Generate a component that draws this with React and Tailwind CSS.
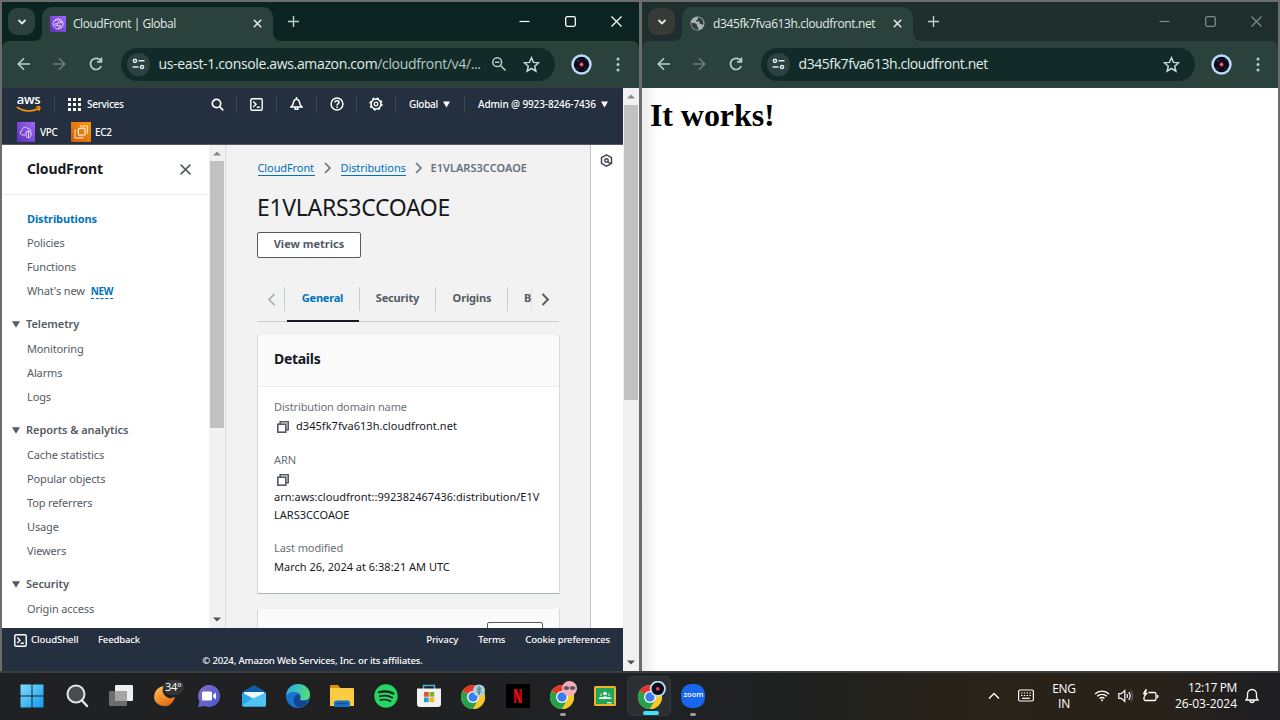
import React from "react";

const AWS = "font-['Noto_Sans',sans-serif]";

function Chevron({ className = "", d = "M2 4.5 6 8.5 10 4.5", w = 1.8 }) {
  return (
    <svg className={className} width="12" height="12" viewBox="0 0 12 12" fill="none" stroke="currentColor" strokeWidth={w}>
      <path d={d} />
    </svg>
  );
}

function CloudFrontIcon() {
  return (
    <svg width="16" height="16" viewBox="0 0 16 16" className="shrink-0">
      <defs>
        <linearGradient id="cf" x1="0" y1="1" x2="1" y2="0">
          <stop offset="0" stopColor="#5a30b5" />
          <stop offset="1" stopColor="#a166ff" />
        </linearGradient>
      </defs>
      <rect width="16" height="16" fill="url(#cf)" />
      <g fill="none" stroke="#eadfff" strokeWidth="0.9">
        <circle cx="8" cy="8" r="5" />
        <circle cx="6" cy="8.7" r="1.2" />
        <circle cx="9.6" cy="5.8" r="1.2" />
        <circle cx="9.8" cy="10.6" r="1.2" />
        <path d="M7 8 8.7 6.6M7 9.3l1.8.9M4 5.2l4-1.8M12.6 7l-2-1" />
      </g>
    </svg>
  );
}

function GlobeIcon() {
  return (
    <svg width="15" height="15" viewBox="0 0 15 15" className="shrink-0">
      <circle cx="7.5" cy="7.5" r="7" fill="#a9b3b1" />
      <path d="M1.2 6.800 4.800 7.200c1.500.2 2.200 1.200 2.200 2.300v1.300c.9 0 1.300.5 1.300 1.300v1.700A6.500 6.500 0 0 1 1.200 6.800ZM7.800 1.200v1.500c0 1-.8 1.500-1.800 1.500v1.400h2.600c.7 0 1.200.5 1.200 1.200v1.300h1.300c.8 0 1.300.6 1.500 1.400a6.300 6.300 0 0 0 .9-2.700 6.300 6.300 0 0 0-5.700-5.600Z" fill="#2a413c" />
    </svg>
  );
}

function Avatar({ size = 21 }) {
  return (
    <svg width={size} height={size} viewBox="0 0 21 21" className="shrink-0">
      <circle cx="10.500" cy="10.500" r="10.200" fill="#b9daf5" />
      <circle cx="10.500" cy="10.500" r="7.700" fill="#0b0a1c" />
      <path d="M6 6.500l2 .8M14 5.500l1 1M6 14.500l1.500-.6M13.500 14.500l1-.6" stroke="#6a6f95" strokeWidth="0.800" />
      <circle cx="10.500" cy="10.500" r="2.200" fill="#c9303f" />
      <circle cx="10.500" cy="10.500" r="1" fill="#ff9a9a" />
    </svg>
  );
}

function Flare({ flip }) {
  return (
    <svg width="8" height="8" viewBox="0 0 8 8" className={flip ? "-scale-x-100 self-end" : "self-end"}>
      <path d="M8 0v8H0a8 8 0 0 0 8-8Z" fill="#2a413c" />
    </svg>
  );
}

function BrowserWindow({ active, icon, title, titleClass, url, zoomed, children }) {
  const strip = active ? "bg-[#0b2421]" : "bg-[#1e2e2c]";
  const dd = active ? "bg-[#2a413c]" : "bg-[#383a37]";
  const ctl = active ? "pr-[17px] text-white" : "pr-[16px] text-[#7f8a88]";
  return (
    <div className="flex h-[669px] flex-col">
      <div className={`flex h-[39px] shrink-0 ${strip}`}>
        <div className={`ml-[6px] mt-[6px] flex h-[27px] w-[27px] items-center justify-center rounded-[9px] text-[#e3ece9] ${dd}`}>
          <Chevron d="M2.500 4 6 7.500 9.500 4" />
        </div>
        <div className="-ml-px flex"><Flare /></div>
        <div className="mt-[5px] flex h-[34px] w-[231px] items-center rounded-t-[10px] bg-[#2a413c] pb-px pl-[8px]">
          {icon}
          <span className={`whitespace-nowrap font-['Open_Sans',sans-serif] text-[12px] leading-[16px] text-[#e0ebe8] ${titleClass}`}>{title}</span>
          <svg className="ml-auto mr-[11px]" width="9" height="9" viewBox="0 0 9 9" stroke="#e3ece9" strokeWidth="1.500"><path d="M.8.8l7.400 7.400M8.200.8.8 8.200" /></svg>
        </div>
        <Flare flip />
        <svg className="ml-[7px] mt-[14px]" width="11" height="11" viewBox="0 0 11 11" stroke="#c3d0cd" strokeWidth="1.400"><path d="M5.500 0v11M0 5.500h11" /></svg>
        <div className={`ml-auto flex items-center pb-px ${ctl}`}>
          <svg width="11" height="11" viewBox="0 0 11 11" stroke="currentColor" strokeWidth="1.200"><path d="M.5 5.500h10" /></svg>
          <svg className="ml-[35px]" width="11" height="11" viewBox="0 0 11 11" fill="none" stroke="currentColor" strokeWidth="1.300"><rect x=".7" y=".7" width="9.600" height="9.600" rx="1.500" /></svg>
          <svg className="ml-[35px]" width="11" height="11" viewBox="0 0 11 11" stroke="currentColor" strokeWidth="1.300"><path d="M.5.5l10 10M10.500.5l-10 10" /></svg>
        </div>
      </div>
      <div className={`h-[47px] shrink-0 ${strip}`}>
        <div className="flex h-[47px] items-center rounded-t-[7px] bg-[#2a413c] pb-px pl-[15px]">
          <svg width="14" height="14" viewBox="0 0 14 14" fill="none" stroke="#b9d0ca" strokeWidth="1.600"><path d="M13 7H1.500M7 1.300 1.300 7 7 12.700" /></svg>
          <svg className="ml-[21px]" width="14" height="14" viewBox="0 0 14 14" fill="none" stroke="#6b7d79" strokeWidth="1.600"><path d="M1 7h11.500M7 1.300 12.700 7 7 12.700" /></svg>
          <svg className="ml-[22px]" width="16" height="16" viewBox="0 0 16 16" fill="none" stroke="#b9d0ca" strokeWidth="1.700"><path d="M13.200 10.200A5.600 5.600 0 1 1 12.700 4.700M13.400 1.600v4.300H9" /></svg>
          <div className="ml-[17px] flex h-[33px] w-[434px] items-center rounded-full bg-[#122b28] pl-[6px] pr-[15px]">
            <div className="flex h-[23px] w-[23px] items-center justify-center rounded-full bg-[#2d423f]">
              <svg width="13" height="12" viewBox="0 0 13 12" fill="none" stroke="#dcebe7" strokeWidth="1.500"><circle cx="3" cy="2.800" r="1.600" /><circle cx="10" cy="9" r="1.600" /><path d="M6.500 2.800H12.500M.5 9H6.500" /></svg>
            </div>
            <div className="ml-[8.500px] whitespace-nowrap font-['Open_Sans',sans-serif] text-[14px] leading-[18px] text-[#e0eeea]">{url}</div>
            {zoomed && (
              <svg className="ml-auto mr-[16px]" width="16" height="16" viewBox="0 0 16 16" fill="none" stroke="#b9d0ca" strokeWidth="1.500"><circle cx="6.200" cy="6.200" r="4.400" /><path d="M9.500 9.500l5 5M4 6.200h4.400" /></svg>
            )}
            <svg className={zoomed ? "" : "ml-auto"} width="17" height="17" viewBox="0 0 17 17" fill="none" stroke="#c6d8d3" strokeWidth="1.500"><path d="M8.500 1.700l2 4.700 5.100.4-3.900 3.400 1.200 5-4.400-2.700-4.400 2.700 1.200-5L1.400 6.800l5.100-.4Z" /></svg>
          </div>
          <div className="ml-[16px] flex"><Avatar /></div>
          <svg className="ml-[23.500px]" width="4" height="15" viewBox="0 0 4 15" fill="#b9d0ca"><circle cx="2" cy="2" r="1.500" /><circle cx="2" cy="7.500" r="1.500" /><circle cx="2" cy="13" r="1.500" /></svg>
        </div>
      </div>
      {children}
    </div>
  );
}

function Divider() {
  return <div className="h-[17px] w-px shrink-0 bg-[#3b4757]" />;
}

function ShellIcon() {
  return (
    <svg width="13" height="13" viewBox="0 0 13 13" fill="none" stroke="#fff" strokeWidth="1.400" className="shrink-0"><rect x=".8" y=".8" width="11.400" height="11.400" rx="1.200" /><path d="M3.300 3.500 6 6.200 3.300 8.900M6.800 9.300h3" /></svg>
  );
}

function AwsHeader() {
  return (
    <div className={`h-[57px] shrink-0 border-b border-[#545b64] bg-[#242f40] text-[10.500px] text-white ${AWS}`}>
      <div className="flex h-[32px] items-center pl-[14px]">
        <div className="flex w-[25px] flex-col items-center">
          <span className="h-[11px] font-['Open_Sans',sans-serif] text-[13px] font-semibold leading-[9px] tracking-[-0.300px]">aws</span>
          <svg width="25" height="7" viewBox="0 0 25 7" fill="none" stroke="#ff9900" strokeWidth="1.500"><path d="M.8 1.200C7 5.800 16 6.300 22.500 2.500M20.300.9c2-.3 3.700-.2 3.600.3 0 1-.6 2.600-1.400 3.600" /></svg>
        </div>
        <div className="ml-[13px] flex"><Divider /></div>
        <svg className="ml-[13px]" width="13" height="13" viewBox="0 0 13 13" fill="#fff">
          {[0, 5, 10].map((x) => [0, 5, 10].map((y) => <rect key={`${x}-${y}`} x={x} y={y} width="3" height="3" />))}
        </svg>
        <span className="ml-[6px] w-[37px] whitespace-nowrap text-[10px] font-medium tracking-[-0.300px]">Services</span>
        <svg className="ml-[87px]" width="13" height="13" viewBox="0 0 13 13" fill="none" stroke="#fff" strokeWidth="1.700"><circle cx="5.500" cy="5.500" r="4.200" /><path d="M8.600 8.600 12.300 12.300" /></svg>
        <div className="ml-[12px] flex"><Divider /></div>
        <div className="flex w-[39px] justify-center"><ShellIcon /></div>
        <Divider />
        <div className="flex w-[39px] justify-center">
          <svg width="13" height="14" viewBox="0 0 13 14" fill="none" stroke="#fff" strokeWidth="1.500"><path d="M1 10h11C9.700 8.500 9.800 6.500 9.300 4.500a2.900 2.900 0 0 0-5.600 0C3.200 6.500 3.300 8.500 1 10ZM6.500 0v2M5.200 10.500v1.700h2.600v-1.700" /></svg>
        </div>
        <Divider />
        <div className="flex w-[39px] justify-center">
          <svg width="14" height="14" viewBox="0 0 14 14" fill="none" stroke="#fff" strokeWidth="1.500"><circle cx="7" cy="7" r="5.900" /><path d="M5 5.500C5 3.200 9 3.200 9 5.500 9 7 7 6.700 7 8.400M7 9.500v1.400" /></svg>
        </div>
        <Divider />
        <div className="flex w-[38px] justify-center">
          <svg width="14" height="14" viewBox="0 0 14 14" fill="none" stroke="#fff"><circle cx="7" cy="7" r="4.900" strokeWidth="1.500" /><circle cx="7" cy="7" r="6" strokeWidth="1.300" strokeDasharray="2.350 2.360" /><circle cx="7" cy="7" r="1.800" strokeWidth="1.300" /></svg>
        </div>
        <Divider />
        <span className="ml-[13px] w-[29px] whitespace-nowrap text-[10px] font-medium tracking-[-0.300px]">Global</span>
        <svg className="ml-[5px]" width="7" height="7" viewBox="0 0 7 7" fill="#fff"><path d="M0 .5h7L3.500 6.500Z" /></svg>
        <div className="ml-[14px] flex"><Divider /></div>
        <span className="ml-[13px] w-[119px] whitespace-nowrap text-[10px] font-medium tracking-[-0.120px]">Admin @ 9923-8246-7436</span>
        <svg className="ml-[4px]" width="7" height="7" viewBox="0 0 7 7" fill="#fff"><path d="M0 .5h7L3.500 6.500Z" /></svg>
      </div>
      <div className="flex h-[24px] items-center pl-[15px]">
        <svg width="18" height="20" viewBox="0 0 18 20" className="shrink-0"><rect width="18" height="20" fill="url(#cf)" /><g fill="none" stroke="#e3d6ff" strokeWidth="1"><path d="M8 13H6C2.500 13 2.500 9 5 8.500 5 5 9.500 4 11 7c2-.3 3 1 2.700 2" /><path d="M9 10l2.500-1L14 10v3.500c0 1.200-1.300 2-2.500 2.500C10.300 15.500 9 14.700 9 13.500ZM11.500 9v7" /></g></svg>
        <span className="ml-[5px] w-[18px] whitespace-nowrap text-[10px] font-medium tracking-[-0.400px]">VPC</span>
        <svg className="ml-[13px] shrink-0" width="20" height="20" viewBox="0 0 20 20">
          <defs><linearGradient id="ec" x1="0" y1="1" x2="1" y2="0"><stop offset="0" stopColor="#cf5a12" /><stop offset="1" stopColor="#fb9a0d" /></linearGradient></defs>
          <rect width="20" height="20" fill="url(#ec)" /><g fill="none" stroke="#ffeccf" strokeWidth="1"><rect x="7.500" y="6.500" width="6.500" height="6.500" /><path d="M9 6.500v-1.300M11 6.500v-1.300M13 6.500v-1.300M9 14.300V13M11 14.300V13M7.500 8.500H6.200M7.500 11H6.200M15.300 8.500H14M15.300 11H14M5 8H4v8h8v-1M9 4h7.500v7.500" /></g>
        </svg>
        <span className="ml-[4px] whitespace-nowrap text-[10px] font-medium tracking-[-0.300px]">EC2</span>
      </div>
    </div>
  );
}

function NavItem({ children, className = "text-[#545b64]" }) {
  return <div className={`flex h-[24px] items-center whitespace-nowrap pl-[25px] text-[11px] tracking-[-0.130px] ${className}`}>{children}</div>;
}

function NavGroup({ children }) {
  return (
    <div className="flex h-[34px] items-center whitespace-nowrap pl-[10px] pt-[9px] text-[11px] font-semibold tracking-[-0.050px] text-[#545b64]">
      <svg width="8" height="7" viewBox="0 0 8 7" fill="#545b64"><path d="M0 .3h8L4 6.700Z" /></svg>
      <span className="ml-[6px]">{children}</span>
    </div>
  );
}

function ScrollBar({ thumb, up = "#8a8a8a" }) {
  return (
    <div className="flex w-[16px] shrink-0 flex-col items-center bg-[#f1f1f1]">
      <svg className="my-[6px] shrink-0" width="8" height="5" viewBox="0 0 8 5"><path d="M0 4.500 4 .5l4 4Z" fill={up} /></svg>
      <div className={`w-[14px] shrink-0 bg-[#c1c1c1] ${thumb}`} />
      <svg className="mb-[6px] mt-auto shrink-0" width="8" height="5" viewBox="0 0 8 5"><path d="M0 .5 4 4.500l4-4Z" fill="#505050" /></svg>
    </div>
  );
}

function Sidebar() {
  return (
    <div className="flex shrink-0">
      <div className="w-[207px] overflow-hidden bg-white">
        <div className="flex h-[50px] items-center border-b border-[#eaeded] pb-px pl-[25px]">
          <span className="text-[14px] font-bold leading-[18px] tracking-[-0.150px] text-[#16191f]">CloudFront</span>
          <svg className="ml-auto mr-[18px]" width="11" height="11" viewBox="0 0 11 11" stroke="#545b64" strokeWidth="1.600"><path d="M.6.6l9.800 9.800M10.400.6.6 10.400" /></svg>
        </div>
        <div className="pt-[12px]">
          <NavItem className="font-bold text-[#0073bb]">Distributions</NavItem>
          <NavItem>Policies</NavItem>
          <NavItem>Functions</NavItem>
          <NavItem>What's new <span className="ml-[6px] mt-px border-b border-dashed border-[#0073bb] text-[10px] font-bold leading-[13px] tracking-[-0.400px] text-[#0073bb]">NEW</span></NavItem>
          <NavGroup>Telemetry</NavGroup>
          <NavItem>Monitoring</NavItem>
          <NavItem>Alarms</NavItem>
          <NavItem>Logs</NavItem>
          <NavGroup>Reports &amp; analytics</NavGroup>
          <NavItem>Cache statistics</NavItem>
          <NavItem>Popular objects</NavItem>
          <NavItem>Top referrers</NavItem>
          <NavItem>Usage</NavItem>
          <NavItem>Viewers</NavItem>
          <NavGroup>Security</NavGroup>
          <NavItem>Origin access</NavItem>
        </div>
      </div>
      <ScrollBar thumb="-mt-px h-[267px]" />
      <div className="w-px bg-[#dcdfdf]" />
    </div>
  );
}

function CopyIcon() {
  return (
    <svg width="12" height="12" viewBox="0 0 12 12" fill="none" stroke="#545b64" strokeWidth="1.600"><rect x=".8" y="3.200" width="8" height="8" /><path d="M3.200 3V.8h8v8H9" /></svg>
  );
}

function Details() {
  return (
    <div className="flex min-w-0 flex-1 flex-col overflow-hidden bg-[#f2f2f2] pl-[31px] pr-[30px]">
      <div className="mt-[14px] flex h-[18px] shrink-0 items-center whitespace-nowrap text-[11px] text-[#0073bb]">
        <span className="ml-[0.500px] w-[57px] border-b border-[#0073bb] leading-[14px] tracking-[-0.100px]">CloudFront</span>
        <svg className="mx-[9px]" width="8" height="12" viewBox="0 0 8 12" fill="none" stroke="#687078" strokeWidth="1.600"><path d="M1 1l5 5-5 5" /></svg>
        <span className="w-[65px] border-b border-[#0073bb] leading-[14px] tracking-[-0.100px]">Distributions</span>
        <svg className="ml-[9px] mr-[8px]" width="8" height="12" viewBox="0 0 8 12" fill="none" stroke="#687078" strokeWidth="1.600"><path d="M1 1l5 5-5 5" /></svg>
        <span className="font-semibold tracking-[0.020px] text-[#687078]">E1VLARS3CCOAOE</span>
      </div>
      <div className="mt-[14px] h-[32px] shrink-0 whitespace-nowrap text-[23px] leading-[32px] tracking-[-0.300px] text-[#16191f]">E1VLARS3CCOAOE</div>
      <div className="mt-[9px] flex h-[26px] w-[104px] shrink-0 items-center justify-center rounded-[2px] border border-[#545b64] bg-white pb-[2px] text-[11px] font-bold leading-[16px] text-[#545b64]">View metrics</div>
      <div className="mt-[27px] flex h-[37px] w-[302px] shrink-0 border-b border-[#c8cdce] text-[11px] font-bold text-[#545b64]">
        <div className="flex h-[28px] w-[27px] items-center pl-[10px]">
          <svg width="9" height="13" viewBox="0 0 9 13" fill="none" stroke="#aab7b8" strokeWidth="1.800"><path d="M7.500 1 2 6.500 7.500 12" /></svg>
        </div>
        <div className="mt-[2px] h-[24px] w-px bg-[#c8cdce]" />
        <div className="ml-[2px] flex h-[37px] w-[72px] justify-center border-b-2 border-[#16191f] text-[#0073bb]"><span className="flex h-[26px] items-center pr-px tracking-[-0.200px]">General</span></div>
        <div className="mt-[2px] h-[24px] w-px bg-[#c8cdce]" />
        <div className="flex h-[26px] w-[75px] items-center justify-center tracking-[-0.150px]">Security</div>
        <div className="mt-[2px] h-[24px] w-px bg-[#c8cdce]" />
        <div className="flex h-[26px] w-[71px] items-center justify-center pl-px tracking-[-0.150px]">Origins</div>
        <div className="mt-[2px] h-[24px] w-px bg-[#c8cdce]" />
        <div className="flex h-[26px] w-[23px] items-center overflow-hidden pl-[16px]">B</div>
        <div className="mt-[2px] h-[24px] w-px bg-[#e0e3e3]" />
        <svg className="ml-[9px] mt-[8px]" width="9" height="13" viewBox="0 0 9 13" fill="none" stroke="#545b64" strokeWidth="1.900"><path d="M1.500 1 7 6.500 1.500 12" /></svg>
      </div>
      <div className="mt-[13px] h-[259px] w-[303px] shrink-0 border border-t-0 border-[#d5dbdb] border-b-[#aab7b8] bg-white text-[11px] text-[#16191f]">
        <div className="flex h-[52px] items-center border-b border-[#eaeded] bg-[#fafafa] pb-[4px] pl-[16px] text-[14px] font-bold tracking-[-0.300px]">Details</div>
        <div className="flex flex-col pl-[16px] pt-[11px]">
          <div className="h-[18px] leading-[18px] tracking-[-0.130px] text-[#687078]">Distribution domain name</div>
          <div className="mt-[1px] flex h-[19px] items-center pl-[3px]"><CopyIcon /><span className="ml-[7px] tracking-[0.050px]">d345fk7fva613h.cloudfront.net</span></div>
          <div className="mt-[15px] h-[18px] leading-[18px] tracking-[-0.100px] text-[#687078]">ARN</div>
          <div className="mt-[2px] flex h-[17px] items-center pl-[3px]"><CopyIcon /></div>
          <div className="whitespace-nowrap leading-[18px] tracking-[0.010px]">arn:aws:cloudfront::992382467436:distribution/E1V<br />LARS3CCOAOE</div>
          <div className="mt-[15px] h-[18px] leading-[18px] tracking-[-0.080px] text-[#687078]">Last modified</div>
          <div className="mt-[1px] leading-[18px]">March 26, 2024 at 6:38:21 AM UTC</div>
        </div>
      </div>
      <div className="mt-[15px] flex h-[60px] w-[303px] shrink-0 justify-end border-x border-[#d5dbdb] bg-[#fafafa] pr-[16px] pt-[13px]">
        <div className="h-[26px] w-[56px] rounded-[2px] border border-[#545b64] bg-white" />
      </div>
    </div>
  );
}

function Console() {
  return (
    <div className={`flex h-[583px] ${AWS}`}>
      <div className="flex w-[621px] flex-col">
        <AwsHeader />
        <div className="flex h-[483px] shrink-0">
          <Sidebar />
          <Details />
          <div className="flex w-[33px] shrink-0 justify-center border-l border-[#c0c6c6] bg-white pr-px pt-[9px]">
            <svg width="13" height="13" viewBox="0 0 13 13" fill="none" stroke="#414750" strokeWidth="1.500"><path d="M6.500.9 11.500 3.700v5.600L6.500 12.100 1.500 9.300V3.700Z" /><circle cx="6.500" cy="6.500" r="1.700" /><path d="M7.800 7.800l3.500 2" /></svg>
          </div>
        </div>
        <div className="flex-1 bg-[#242f40] text-[9.600px] font-medium text-white">
          <div className="flex h-[25px] items-center whitespace-nowrap pl-[12px] pr-[13px] tracking-[-0.200px]">
            <ShellIcon />
            <span className="ml-[4px] w-[47px] tracking-[-0.100px]">CloudShell</span>
            <span className="ml-[20px]">Feedback</span>
            <span className="ml-auto tracking-[-0.100px]">Privacy</span>
            <span className="ml-[20px]">Terms</span>
            <span className="ml-[20px]">Cookie preferences</span>
          </div>
          <div className="h-[16px] text-center leading-[15px] tracking-[-0.180px]">© 2024, Amazon Web Services, Inc. or its affiliates.</div>
        </div>
      </div>
      <ScrollBar thumb="h-[295px]" />
    </div>
  );
}

function ChromeIcon({ children }) {
  return (
    <svg width="30" height="30" viewBox="0 0 30 30">
      <circle cx="14" cy="16" r="12" fill="#f7c928" />
      <path d="M14 16 3.600 10A12 12 0 0 1 24.400 10Z" fill="#e2382c" />
      <path d="M14 16 3.600 10A12 12 0 0 0 14 28L19.200 19Z" fill="#27a14b" />
      <path d="M14 10h10.400A12 12 0 0 1 14 28l5.200-9Z" fill="#f7c928" />
      <circle cx="14" cy="16" r="6" fill="#fff" />
      <circle cx="14" cy="16" r="4.700" fill="#3b7ded" />
      {children}
    </svg>
  );
}

function Cell({ children, mark = "", className = "" }) {
  return (
    <div className={`relative flex h-[40px] w-[44.100px] shrink-0 items-center justify-center ${className}`}>
      {children}
      {mark && <div className={`absolute bottom-0 rounded-full ${mark}`} />}
    </div>
  );
}

function Taskbar() {
  return (
    <div className="flex h-[49px] items-center border-t-2 border-[#3c3d3f] bg-[linear-gradient(90deg,#202124_0%,#202020_30%,#1f2226_50%,#20211f_65%,#292319_76%,#292219_90%,#1f1f21_98%)] pb-[2px] pl-[10px] font-['Open_Sans',sans-serif] text-white">
      <Cell>
        <svg width="24" height="24" viewBox="0 0 24 24"><defs><linearGradient id="wn" x1="0" y1="0" x2="1" y2="1"><stop offset="0" stopColor="#7fddff" /><stop offset="1" stopColor="#109bf0" /></linearGradient></defs><path d="M.5.5h11v11H.5ZM12.500.5h11v11h-11ZM.5 12.500h11v11H.5ZM12.500 12.500h11v11h-11Z" fill="url(#wn)" /></svg>
      </Cell>
      <Cell className="pl-[2px]">
        <svg width="24" height="24" viewBox="0 0 24 24" fill="none"><circle cx="11" cy="10" r="8.500" fill="#4a4b4d" stroke="#e6e6e6" strokeWidth="2" /><path d="M17 16.500l5 5.500" stroke="#e6e6e6" strokeWidth="2.500" strokeLinecap="round" /></svg>
      </Cell>
      <Cell className="pl-[2px]">
        <svg width="26" height="24" viewBox="0 0 26 24"><rect x="7" y="1" width="18" height="16" rx="1" fill="#eeeeee" /><rect x="1" y="7" width="18" height="15" rx="1" fill="#6d6d6d" /><rect x="7" y="7" width="12" height="10" fill="#a5a5a5" /></svg>
      </Cell>
      <Cell className="pl-[6px]">
        <svg width="36" height="34" viewBox="0 0 36 34"><defs><linearGradient id="mo" x1="0" y1="0" x2="0.500" y2="1"><stop offset="0" stopColor="#ffc65a" /><stop offset="1" stopColor="#e86f12" /></linearGradient></defs><path d="M16 7C12 9 13 17 20 19c3 .8 4-1 6-1C24 24 20 28 14.500 27 7 26 4 21 5.500 15 7 10 11 7 16 7Z" fill="url(#mo)" /><rect x="14" y="1" width="21" height="15" rx="7.500" fill="#333436" /><text x="16" y="12" fill="#fff" fontSize="11" letterSpacing="-0.300" fontFamily="Open Sans">34°</text></svg>
      </Cell>
      <Cell className="pl-px">
        <svg width="24" height="24" viewBox="0 0 24 24"><defs><linearGradient id="ch" x1="0" y1="0" x2="1" y2="0.600"><stop offset="0" stopColor="#8a6ac8" /><stop offset="1" stopColor="#4e5cd0" /></linearGradient></defs><path d="M12 1a11 11 0 1 1-4.500 21L1 23l1.500-5.500A11 11 0 0 1 12 1Z" fill="url(#ch)" /><rect x="5" y="7.500" width="10" height="9" rx="1.500" fill="#fff" /><path d="M16 11l3-2.500v7L16 13Z" fill="#fff" /></svg>
      </Cell>
      <Cell className="pl-[2px]">
        <svg width="26" height="24" viewBox="0 0 26 24"><path d="M1 8 13 1l12 7v14H1Z" fill="#0f5ca8" /><path d="M3 8h20v9H3Z" fill="#eef7fc" /><path d="M1 8.500 13 15l12-6.500V21a1.500 1.500 0 0 1-1.500 1.500h-21A1.500 1.500 0 0 1 1 21Z" fill="#28a8e8" /><path d="M1 21.500 13 14 25 8.500V21a1.500 1.500 0 0 1-1.500 1.500h-21Z" fill="#50c3f5" /></svg>
      </Cell>
      <Cell className="pl-[2px]">
        <svg width="26" height="26" viewBox="0 0 26 26"><defs><linearGradient id="e1" x1="0" y1="0.200" x2="1" y2="0.500"><stop offset="0" stopColor="#29a9e4" /><stop offset="1" stopColor="#55dc7a" /></linearGradient></defs><circle cx="13" cy="13" r="12" fill="#1872cf" /><path d="M1 13C2 5 7 1 13 1c7 0 12 5 12 10.500 0 4-3 6-7 6-2 0-3.500-.8-3-1.800C17 13 15 9 10 9c-4 0-8 1.500-9 4Z" fill="url(#e1)" /><path d="M15 15.700c-.5 1 1 1.800 3 1.800 2.500 0 4.500-.5 5.600-1.500C22 21 19 24 15 24.500c-5-.5-7-5-6-9 .6-2.500 2-3.800 4-4 2.300.8 2.800 2.700 2 4.200Z" fill="#12458f" /></svg>
      </Cell>
      <Cell className="pl-[2px]">
        <svg width="26" height="24" viewBox="0 0 26 24"><path d="M1 2a1 1 0 0 1 1-1h7l2.500 3H1Z" fill="#d9940f" /><path d="M1 4h23a1 1 0 0 1 1 1v17H1Z" fill="#fbcb44" /><path d="M5 23v-4a2.500 2.500 0 0 1 2.500-2.500h11A2.500 2.500 0 0 1 21 19v4Z" fill="#1672c4" /><path d="M8 19.500h10" stroke="#0d4c93" strokeWidth="1.300" /></svg>
      </Cell>
      <Cell className="pl-[2px]">
        <svg width="24" height="24" viewBox="0 0 24 24"><circle cx="12" cy="12" r="11.700" fill="#24d765" /><g fill="none" stroke="#14201a" strokeLinecap="round"><path d="M5 8.200c5-1.400 10-1 14.300 1.200" strokeWidth="2.300" /><path d="M5.800 12.300c4.300-1.200 8.500-.8 12.200 1.200" strokeWidth="1.900" /><path d="M6.300 16c3.700-1 7.200-.6 10.300 1.200" strokeWidth="1.600" /></g></svg>
      </Cell>
      <Cell className="pl-px">
        <svg width="26" height="26" viewBox="0 0 26 26"><path d="M7.500 7V2.500h11V7" fill="none" stroke="#46b2e8" strokeWidth="1.500" /><path d="M1 5.500h24V21a3 3 0 0 1-3 3H4a3 3 0 0 1-3-3Z" fill="#f2f2f2" /><path d="M8 9h4.700v4.700H8Z" fill="#e8502a" /><path d="M13.500 9h4.700v4.700h-4.700Z" fill="#7bb52a" /><path d="M8 14.500h4.700v4.700H8Z" fill="#1d9fe4" /><path d="M13.500 14.500h4.700v4.700h-4.700Z" fill="#f7b51c" /></svg>
      </Cell>
      <Cell className="pl-[3px]">
        <ChromeIcon><circle cx="20" cy="9.500" r="6" fill="#a9d4e3" /><path d="M20 5v9M18 6.500c0 3 4 3 4 0M18 9.500c0 3 4 3 4 0" stroke="#4b6470" fill="none" /></ChromeIcon>
      </Cell>
      <Cell className="pl-px">
        <svg width="24" height="24" viewBox="0 0 24 24"><rect width="24" height="24" fill="#000" /><path d="M8 5h2.700v14H8ZM13.300 5H16v14h-2.700Z" fill="#b1060f" /><path d="M8 5h2.700L16 19h-2.700Z" fill="#e50914" /></svg>
      </Cell>
      <Cell mark="h-[3px] w-[6px] bg-[#9a9a9a]" className="pl-[3px]">
        <ChromeIcon><circle cx="21.500" cy="7.500" r="7.500" fill="#f2aebb" /><path d="M15 7h13" stroke="#a8848c" /><ellipse cx="18.500" cy="7" rx="2.600" ry="2" fill="#5e5660" /><ellipse cx="24.500" cy="7" rx="2.600" ry="2" fill="#5e5660" /></ChromeIcon>
      </Cell>
      <Cell>
        <svg width="22" height="20" viewBox="0 0 22 20"><rect width="22" height="20" rx="1.500" fill="#f0b323" /><rect x="2" y="2" width="18" height="16" fill="#22a45d" /><circle cx="11" cy="7.500" r="1.800" fill="#fff" /><circle cx="7" cy="8.700" r="1.200" fill="#8fd0ab" /><circle cx="15" cy="8.700" r="1.200" fill="#8fd0ab" /><path d="M4.500 13c0-2 3-2.300 4-1.800 1.500-1.200 4-1.200 5 0 1.500-.5 4-.2 4 1.800Z" fill="#e8f6ee" /><path d="M13 16.800h4.500" stroke="#fff" strokeWidth="1.200" /></svg>
      </Cell>
      <Cell mark="h-[4px] w-[16px] bg-[#3fe4f5]" className="rounded-[5px] border border-[#34383d] bg-[#2b2f34] pl-[3px]">
        <ChromeIcon><g transform="translate(13.500 -.5) scale(.79)"><circle cx="10.500" cy="10.500" r="10.200" fill="#b9daf5" /><circle cx="10.500" cy="10.500" r="7.900" fill="#0b0a1c" /><circle cx="10.500" cy="10.500" r="2.400" fill="#e04450" /></g></ChromeIcon>
      </Cell>
      <Cell mark="h-[3px] w-[6px] bg-[#9a9a9a]">
        <div className="flex h-[24px] w-[24px] items-center justify-center rounded-[10px] bg-[#1766ee] text-[7.500px] font-semibold leading-none">
          <span className="-mt-[2px]">zoom</span>
        </div>
      </Cell>
      <div className="ml-auto flex items-center">
        <svg width="12" height="8" viewBox="0 0 12 8" fill="none" stroke="#fff" strokeWidth="1.400"><path d="M1 6.500 6 1.500l5 5" /></svg>
        <svg className="ml-[18px]" width="16" height="13" viewBox="0 0 16 13" fill="none" stroke="#fff" strokeWidth="1.200"><rect x=".6" y="1" width="14.800" height="11" rx="1.500" /><path d="M3 4h10M3 6.500h10" strokeDasharray="1.500 1.300" /><path d="M4 9.300h8" /></svg>
        <div className="ml-[17px] w-[26px] text-center text-[12px] leading-[15px] tracking-[-0.300px]">ENG<br />IN</div>
        <svg className="ml-[17px]" width="16" height="13" viewBox="0 0 16 13" fill="none" stroke="#fff" strokeWidth="1.300"><path d="M1 5a10 10 0 0 1 14 0M3.200 7.300a7 7 0 0 1 9.600 0M5.500 9.500a4 4 0 0 1 5 0" /><circle cx="8" cy="11.300" r="1" fill="#fff" stroke="none" /></svg>
        <svg className="ml-[8px]" width="16" height="14" viewBox="0 0 16 14" fill="none" stroke="#fff" strokeWidth="1.200"><path d="M.8 4.700h2.500L6.800 1.500v11L3.300 9.300H.8ZM8.800 5q1.500 2 0 4M10.700 3.200q3 3.800 0 7.600" /><path d="M12.700 1.500q4 5.500 0 11" stroke="#666" /></svg>
        <svg className="ml-[8px]" width="17" height="14" viewBox="0 0 17 14" fill="none" stroke="#fff" strokeWidth="1.300"><path d="M6.500 3.500h6a1.500 1.500 0 0 1 1.500 1.500v5a1.500 1.500 0 0 1-1.500 1.500h-9A1.500 1.500 0 0 1 2 10V8M15.700 6v3" /><path d="M3.500.5 1 5h1.700L2 8.500 5.500 4H3.700l1-3.500Z" fill="#fff" strokeWidth=".5" /></svg>
        <div className="ml-[15px] flex w-[63px] flex-col items-end whitespace-nowrap text-[12px] leading-[16px]"><span className="tracking-[-0.350px]">12:17 PM</span><span className="tracking-[-0.050px]">26-03-2024</span></div>
        <svg className="ml-[8px] mr-[21px]" width="14" height="16" viewBox="0 0 14 16" fill="none" stroke="#fff" strokeWidth="1.300"><path d="M1 12h12l-1.500-2.700V6a4.500 4.500 0 0 0-9 0v3.300ZM5 12.500a2 2 0 0 0 4 0" /></svg>
      </div>
    </div>
  );
}

export default function App() {
  return (
    <div className="h-[720px] w-[1280px] overflow-hidden bg-[#6a6d6c]">
      <div className="flex h-[671px] pt-[2px]">
        <div className="ml-[2px] w-[637px] overflow-hidden">
          <BrowserWindow
            active
            zoomed
            icon={<CloudFrontIcon />}
            title="CloudFront | Global"
            titleClass="ml-[7px] tracking-[-0.450px]"
            url={<span className="tracking-[-0.350px]">us-east-1.console.aws.amazon.com<span className="text-[#b4c9c3]">/cloudfront/v4/...</span></span>}
          >
            <Console />
          </BrowserWindow>
        </div>
        <div className="ml-[3px] w-[636px] overflow-hidden">
          <BrowserWindow
            icon={<GlobeIcon />}
            title="d345fk7fva613h.cloudfront.net"
            titleClass="ml-[8px] tracking-[-0.370px]"
            url={<span className="tracking-[-0.430px]">d345fk7fva613h.cloudfront.net</span>}
          >
            <div className="flex-1 bg-[linear-gradient(90deg,#ececec_0px,#ffffff_16px)] pl-[8px] pt-[8px] font-['Liberation_Serif',serif] text-[32px] font-bold leading-[38px] tracking-[-0.080px] text-black">It works!</div>
          </BrowserWindow>
        </div>
      </div>
      <Taskbar />
    </div>
  );
}
